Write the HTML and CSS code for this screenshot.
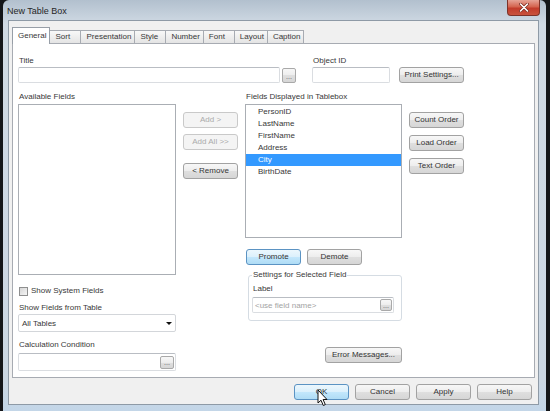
FILE: index.html
```html
<!DOCTYPE html>
<html lang="en">
<head>
  <meta charset="UTF-8">
  <title>New Table Box</title>
  <link rel="stylesheet" href="styles.css">
</head>
<body>
  <div class="window">
    <div class="titlebar">
      <span class="caption">New Table Box</span>
      <span class="close">
        <svg width="10" height="9" viewBox="0 0 10 9">
          <path d="M1.5 1 L8.5 8 M8.5 1 L1.5 8" stroke="#7a2a20" stroke-width="3" stroke-linecap="round"/>
          <path d="M1.5 1 L8.5 8 M8.5 1 L1.5 8" stroke="#fff" stroke-width="1.6" stroke-linecap="round"/>
        </svg>
      </span>
    </div>

    <div class="client">
      <div class="tabs">
        <div class="tab active">General</div>
        <div class="tab">Sort</div>
        <div class="tab">Presentation</div>
        <div class="tab">Style</div>
        <div class="tab">Number</div>
        <div class="tab">Font</div>
        <div class="tab">Layout</div>
        <div class="tab">Caption</div>
      </div>

      <div class="panel">
        <div class="top-row">
          <div class="field">
            <label>Title</label>
            <div class="input-row">
              <div class="input title-input"></div>
              <button class="btn dots">...</button>
            </div>
          </div>
          <div class="field objid-field">
            <label>Object ID</label>
            <div class="input objid-input"></div>
          </div>
          <button class="btn print-btn">Print Settings...</button>
        </div>

        <div class="columns">
          <!-- left: available fields and table filter -->
          <div class="col">
            <label>Available Fields</label>
            <div class="col-body">
              <div class="stack">
                <div class="list list-avail"></div>
                <div class="check-row">
                  <span class="checkbox"></span>
                  <span>Show System Fields</span>
                </div>
                <label class="gap-label">Show Fields from Table</label>
                <div class="select">
                  <span>All Tables</span>
                  <span class="arrow"></span>
                </div>
                <label class="calc-label">Calculation Condition</label>
                <div class="input calc-input">
                  <button class="btn dots">...</button>
                </div>
              </div>
              <div class="side">
                <button class="btn" disabled>Add &gt;</button>
                <button class="btn add-all" disabled>Add All &gt;&gt;</button>
                <button class="btn remove">&lt; Remove</button>
              </div>
            </div>
          </div>

          <!-- right: fields shown in the table box -->
          <div class="col">
            <label>Fields Displayed in Tablebox</label>
            <div class="col-body">
              <div class="stack">
                <div class="list list-shown">
                  <div class="item">PersonID</div>
                  <div class="item">LastName</div>
                  <div class="item">FirstName</div>
                  <div class="item">Address</div>
                  <div class="item selected">City</div>
                  <div class="item">BirthDate</div>
                </div>
                <div class="promote-row">
                  <button class="btn default">Promote</button>
                  <button class="btn">Demote</button>
                </div>
                <fieldset class="group">
                  <legend>Settings for Selected Field</legend>
                  <label class="group-label">Label</label>
                  <div class="input label-input">
                    <span class="placeholder">&lt;use field name&gt;</span>
                    <button class="btn dots small">...</button>
                  </div>
                </fieldset>
                <button class="btn error-btn">Error Messages...</button>
              </div>
              <div class="side side-right">
                <button class="btn">Count Order</button>
                <button class="btn">Load Order</button>
                <button class="btn">Text Order</button>
              </div>
            </div>
          </div>
        </div>
      </div>

      <div class="footer">
        <button class="btn default ok-btn">OK
          <svg class="pointer" width="11" height="18" viewBox="0 0 11 18">
            <path d="M1 1 L1 14 L4 11.2 L6.3 16.5 L8.3 15.6 L6.1 10.5 L10 10.5 Z" fill="#fff" stroke="#111" stroke-width="1" stroke-linejoin="round"/>
          </svg>
        </button>
        <button class="btn">Cancel</button>
        <button class="btn">Apply</button>
        <button class="btn">Help</button>
      </div>
    </div>
  </div>
</body>
</html>
```

FILE: styles.css
```css
* { box-sizing: border-box; }

body {
  margin: 0;
  background: #141619;
  font-family: "Liberation Sans", Arial, sans-serif;
  font-size: 8px;
  color: #383838;
  overflow: hidden;
}

label { display: block; line-height: 10px; padding-left: 1px; }

/* window frame */
.window {
  margin-left: 3px;
  width: 543px;
  height: 411px;
  border-radius: 6px 6px 0 0;
  background: linear-gradient(#b2c0ce, #d0dae4 24px, #cbd7e3 380px, #c3d6e8);
  display: flex;
  flex-direction: column;
}
.titlebar {
  height: 20px;
  display: flex;
  justify-content: space-between;
  align-items: flex-start;
  padding: 0 6px 0 4px;
}
.caption { font-size: 9px; line-height: 22px; color: #262626; }
.close {
  width: 33px;
  height: 16px;
  border: 1px solid #7d3329;
  border-top: none;
  border-radius: 0 0 4px 4px;
  background: linear-gradient(#e6a396, #d4644f 45%, #c23c2b 55%, #c9533e);
  display: flex;
  align-items: center;
  justify-content: center;
}
.client {
  flex: 1;
  margin: 0 7px 6px 5px;
  padding: 6px 3px 0 3px;
  background: #f0f0f0;
  border: 1px solid #8e9aa6;
}

/* tabs */
.tabs {
  display: flex;
  align-items: flex-end;
  position: relative;
  z-index: 1;
}
.tab {
  height: 13px;
  min-width: 32px;
  padding: 0 3px 0 5px;
  margin-left: -1px;
  border: 1px solid #a7abb2;
  border-bottom: none;
  background: linear-gradient(#f8f8f8, #e4e4e4);
  line-height: 12px;
}
.tab:first-child { margin-left: 0; }
.tab.active {
  height: 17px;
  margin-bottom: -1px;
  background: #fff;
  border-color: #979ea7;
  line-height: 15px;
  position: relative;
  z-index: 1;
}
.panel {
  height: 335px;
  background: #fff;
  border: 1px solid #a7abb2;
  padding: 12px 0 0 5px;
}

/* controls */
.btn {
  font: inherit;
  color: #333;
  height: 16px;
  padding: 0;
  border: 1px solid #a2a2a2;
  border-radius: 3px;
  background: linear-gradient(#f7f7f7, #ededed 50%, #dfdfdf 50%, #d6d6d6);
  line-height: 14px;
  text-align: center;
}
.btn.default {
  border-color: #5b93c3;
  background: linear-gradient(#ecf7fd, #dbf0fc 50%, #c3e7fc 50%, #afdcf5);
}
.btn:disabled {
  border-color: #c9c9c9;
  background: #f4f4f4;
  color: #ababab;
}
.input {
  height: 16px;
  background: #fff;
  border: 1px solid #dadde1;
  border-top-color: #b9bdc3;
  border-radius: 2px;
}
.dots {
  width: 14px;
  height: 15px;
  font-size: 7px;
  line-height: 15px;
  border-radius: 2px;
  border-color: #a9a9a9;
  color: #555;
}
.dots.small { width: 12px; height: 12px; line-height: 11px; }

/* top row */
.top-row { display: flex; align-items: flex-end; }
.field label { margin-bottom: 1px; }
.input-row { display: flex; align-items: center; gap: 2px; }
.title-input { width: 262px; }
.objid-field { margin-left: 16px; }
.objid-input { width: 78px; }
.print-btn { width: 65px; margin-left: 9px; }

/* field columns */
.columns { display: flex; gap: 7px; margin-top: 9px; }
.col { display: flex; flex-direction: column; }
.col-body { display: flex; gap: 7px; margin-top: 2px; }
.stack { display: flex; flex-direction: column; }
.side { width: 55px; padding-top: 8px; display: flex; flex-direction: column; }
.side .btn { width: 55px; }
.side .add-all { margin-top: 6px; }
.side .remove { margin-top: 13px; }
.side-right .btn + .btn { margin-top: 7px; }

.list { background: #fff; border: 1px solid #aaaeb4; }
.list-avail { width: 158px; height: 171px; }
.list-shown { width: 157px; height: 134px; padding-top: 1px; }
.item { line-height: 12px; padding-left: 12px; }
.item.selected { background: #3399ff; color: #fff; }

.check-row {
  display: flex;
  align-items: center;
  gap: 3px;
  margin-top: 11px;
  padding-left: 1px;
  line-height: 10px;
}
.checkbox {
  width: 9px;
  height: 9px;
  border: 1px solid #8e8f8f;
  background: linear-gradient(135deg, #d6d6d6, #f6f6f6);
}
.gap-label { margin-top: 7px; }
.select {
  height: 18px;
  margin-top: 1px;
  padding: 0 3px 0 3px;
  background: #fff;
  border: 1px solid #d3d6da;
  border-radius: 2px;
  display: flex;
  align-items: center;
  justify-content: space-between;
}
.arrow {
  width: 0;
  height: 0;
  border-left: 3px solid transparent;
  border-right: 3px solid transparent;
  border-top: 3px solid #111;
}
.calc-label { margin-top: 8px; }
.calc-input {
  height: 18px;
  margin-top: 3px;
  padding-right: 1px;
  display: flex;
  align-items: center;
  justify-content: flex-end;
}
.calc-input .dots { height: 13px; line-height: 12px; }

.promote-row { display: flex; gap: 6px; margin-top: 11px; padding-left: 1px; }
.promote-row .btn { width: 55px; }

.group {
  margin: 5px 0 0 3px;
  padding: 0 7px 7px 3px;
  border: 1px solid #d5dce3;
  border-radius: 3px;
}
.group legend { padding: 0 1px; line-height: 10px; }
.group-label { margin-top: 4px; }
.label-input {
  margin-top: 3px;
  padding: 0 1px 0 2px;
  display: flex;
  align-items: center;
  justify-content: space-between;
}
.placeholder { color: #a3a3a3; }
.error-btn { width: 77px; margin-top: 26px; align-self: flex-end; }

/* dialog buttons */
.footer {
  display: flex;
  justify-content: flex-end;
  gap: 6px;
  margin-top: 6px;
  padding-right: 3px;
}
.footer .btn { width: 55px; }
.ok-btn { position: relative; }
.pointer { position: absolute; left: 22px; top: 4px; }
```
